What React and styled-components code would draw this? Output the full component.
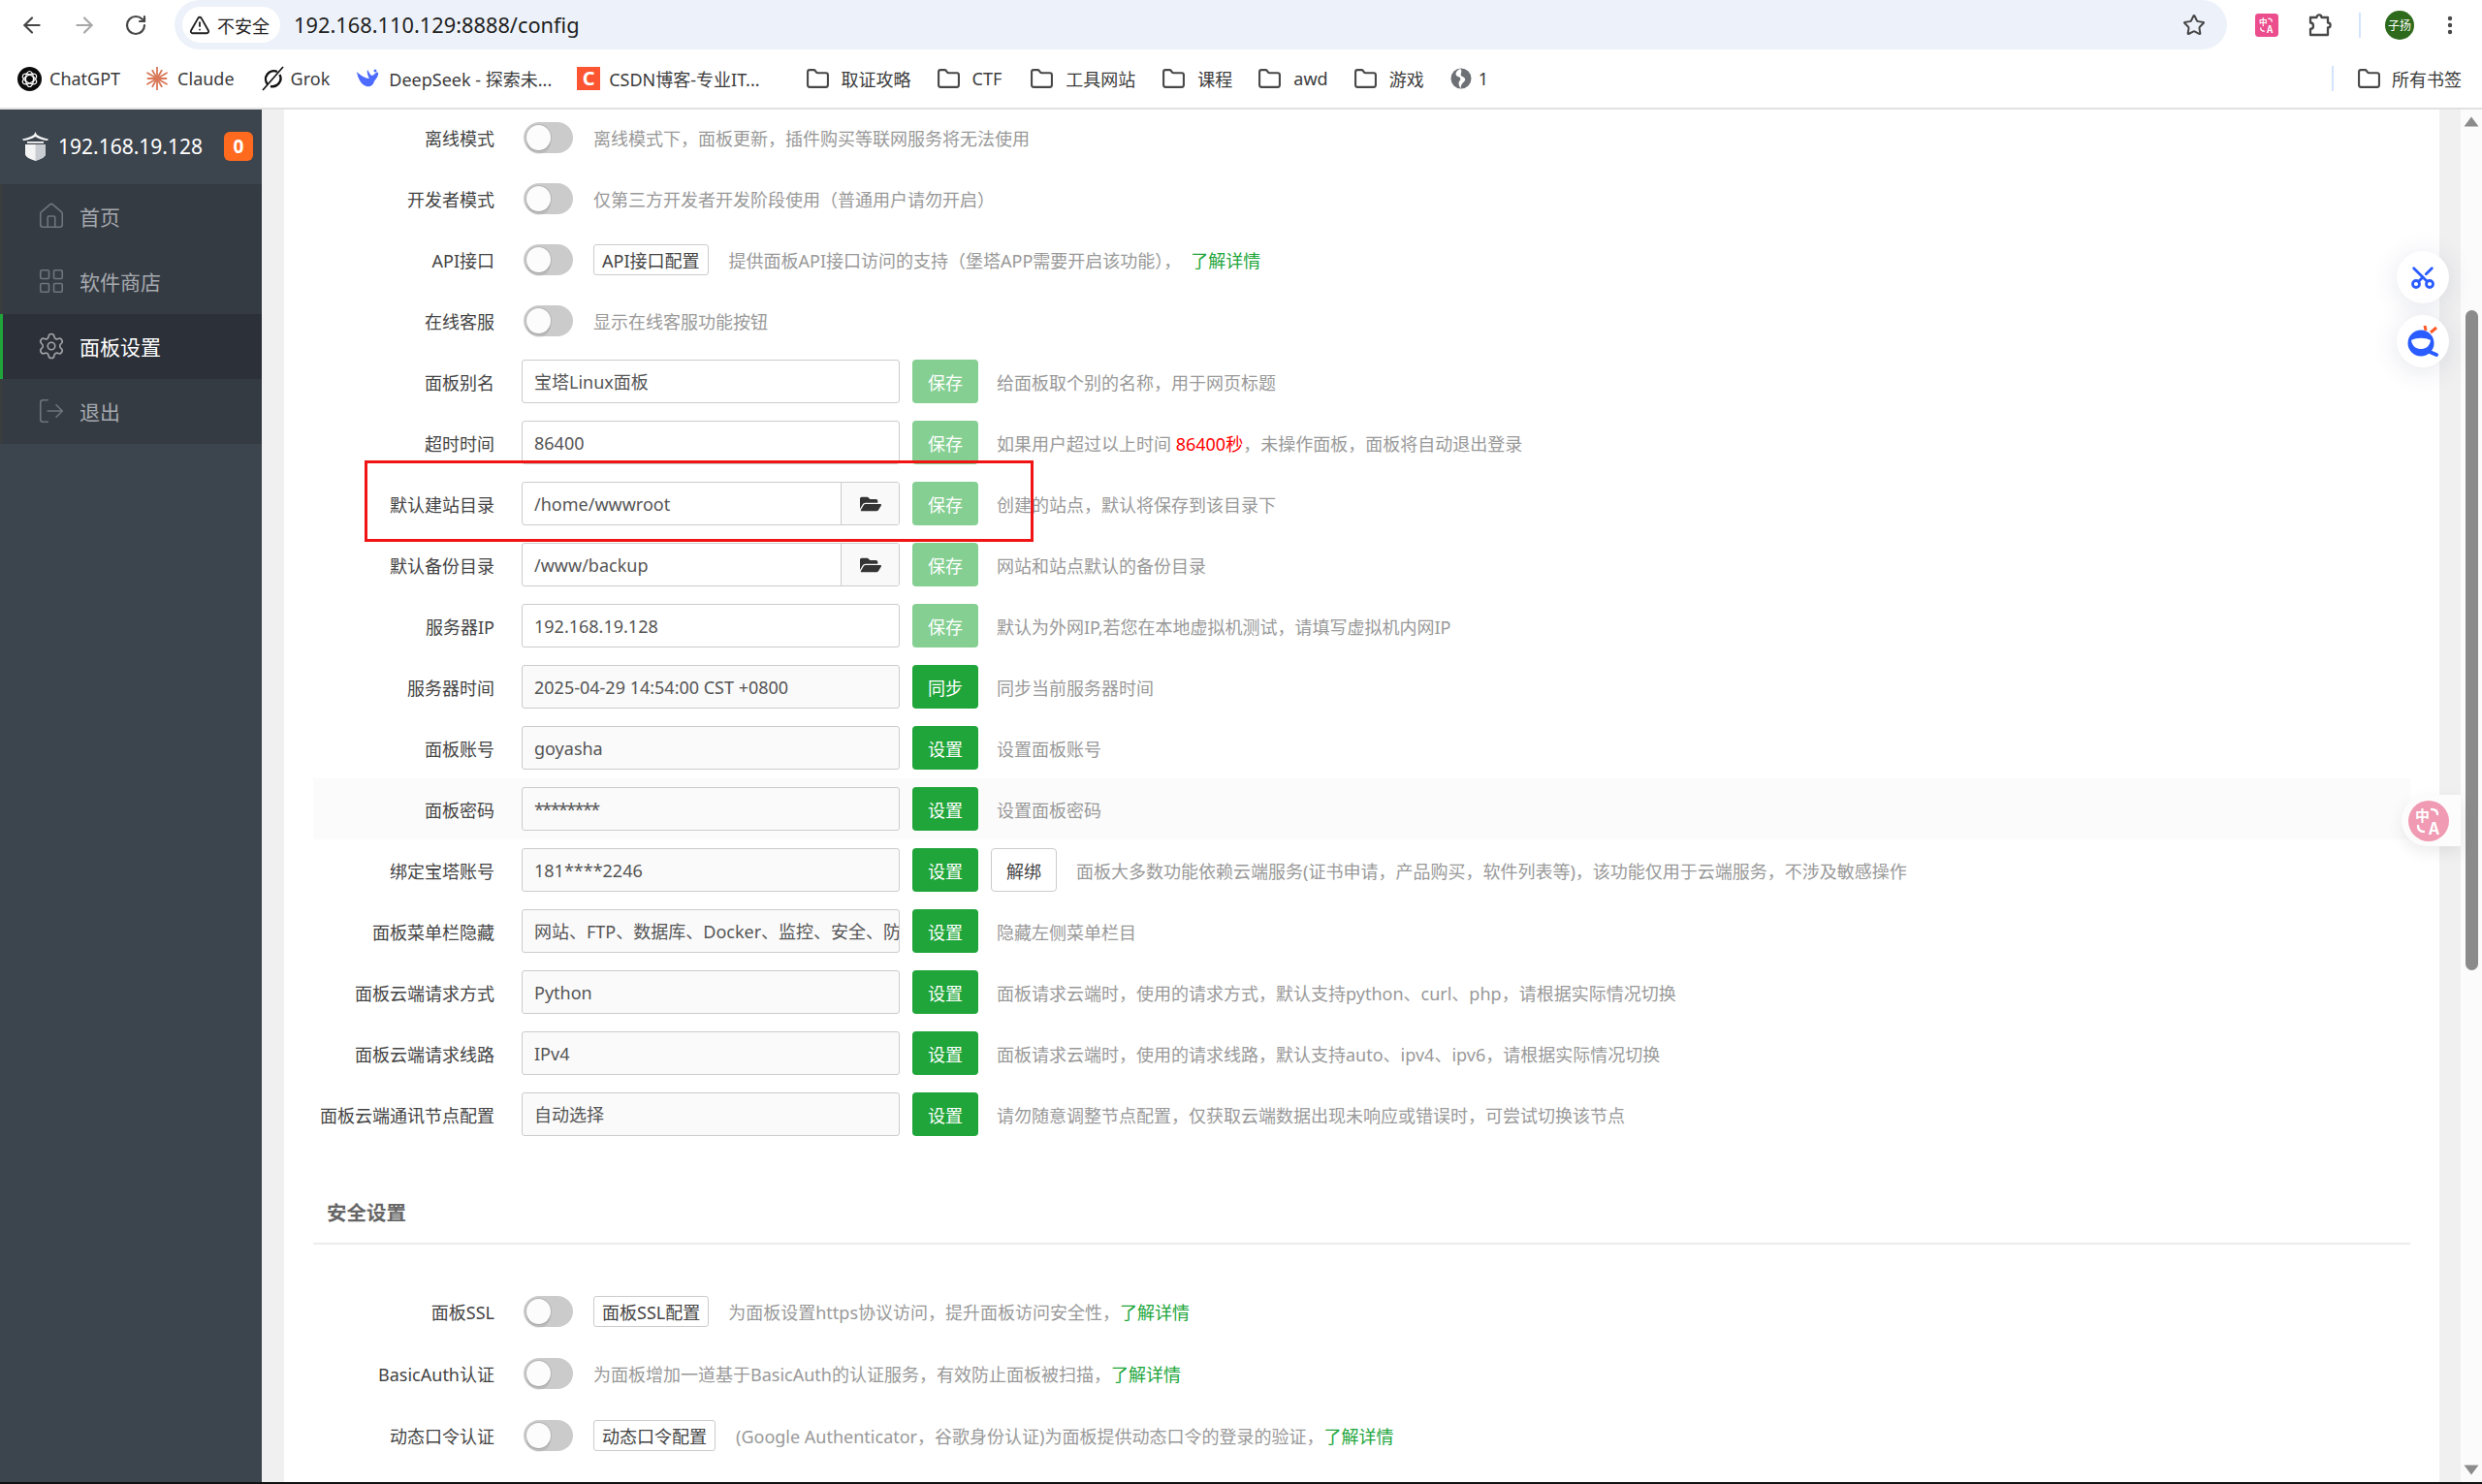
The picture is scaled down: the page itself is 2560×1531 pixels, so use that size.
import React from 'react';
import styled, { createGlobalStyle } from 'styled-components';
import {
  ArrowLeft, ArrowRight, RotateCw, Star, MoreVertical, TriangleAlert,
  Folder, Home, LayoutGrid, Settings, LogOut, Scissors,
} from 'lucide-react';
import { FaFolderOpen } from 'react-icons/fa';

const GlobalStyle = createGlobalStyle`
  html, body { margin: 0; padding: 0; background: #fff; }
  body { font-family: "Noto Sans", "Noto Sans CJK SC", sans-serif; font-size: 18px; }
  * { box-sizing: border-box; }
`;

const Page = styled.div`
  width: 2560px;
  height: 1531px;
  display: flex;
  flex-direction: column;
  overflow: hidden;
`;

/* browser chrome */
const Toolbar = styled.div`
  height: 51px;
  flex: none;
  display: flex;
  align-items: center;
  background: #fff;
`;

const NavButtons = styled.div`
  width: 180px;
  flex: none;
  display: flex;
  align-items: center;
  gap: 28px;
  padding-left: 20px;
`;

const NavIcon = styled.span`
  display: flex;
  color: ${p => (p.$off ? '#a8a8a8' : '#474747')};
`;

const Omnibox = styled.div`
  width: 2117px;
  height: 51px;
  flex: none;
  display: flex;
  align-items: center;
  padding: 0 22px 0 8px;
  background: #edf2fa;
  border-radius: 26px;
`;

const SecurityChip = styled.div`
  height: 37px;
  width: 101px;
  display: flex;
  align-items: center;
  gap: 7px;
  padding-left: 7px;
  background: #fff;
  border-radius: 19px;
  color: #1f1f1f;
  font-size: 18px;
  white-space: nowrap;
`;

const Url = styled.div`
  margin-left: 14px;
  font-size: 21.800px;
  color: #1f1f1f;
  white-space: nowrap;
`;

const OmniEnd = styled.div`
  margin-left: auto;
  display: flex;
  color: #474747;
`;

const ExtBar = styled.div`
  flex: 1;
  display: flex;
  align-items: center;
  padding-left: 29px;
  color: #474747;
`;

const ExtSlot = styled.span`
  display: flex;
  margin-left: 30px;
`;

const VLine = styled.div`
  width: 2px;
  height: ${p => p.$h || 26}px;
  background: #d3e3fd;
  margin: ${p => p.$m || '0 25px 0 27px'};
`;

const Avatar = styled.div`
  width: 30px;
  height: 30px;
  border-radius: 50%;
  background: #2d6a1b;
  color: #fff;
  font-size: 12px;
  display: flex;
  align-items: center;
  justify-content: center;
  white-space: nowrap;
  margin-right: 25px;
`;

const Bookmarks = styled.div`
  height: 62px;
  flex: none;
  display: flex;
  align-items: center;
  padding: 0 20px 0 18px;
  background: #fff;
  border-bottom: 2px solid #e1e1e1;
`;

const Bookmark = styled.div`
  display: flex;
  align-items: center;
  gap: ${p => p.$gap || 10}px;
  margin-right: ${p => p.$after || 26}px;
  font-size: 18px;
  color: #3c3c3c;
  white-space: nowrap;
`;

const BookmarkEnd = styled.div`
  margin-left: auto;
  display: flex;
  align-items: center;
`;

const CsdnMark = styled.span`
  width: 24px;
  height: 24px;
  background: #fc5531;
  color: #fff;
  font-size: 20px;
  font-weight: 700;
  line-height: 24px;
  text-align: center;
`;

/* app body */
const Body = styled.div`
  flex: 1;
  min-height: 0;
  display: flex;
  position: relative;
  overflow: hidden;
`;

const Sidebar = styled.aside`
  width: 270px;
  flex: none;
  background: #3c444d;
`;

const SideHead = styled.div`
  height: 77px;
  display: flex;
  align-items: center;
  padding: 0 0 2px 23px;
  color: #fff;
`;

const HostName = styled.span`
  margin-left: 10px;
  font-size: 21px;
  white-space: nowrap;
`;

const CountBadge = styled.span`
  margin-left: 22px;
  width: 30px;
  height: 30px;
  border-radius: 6px;
  background: #ff6a1f;
  color: #fff;
  font-size: 19px;
  font-weight: 700;
  display: flex;
  align-items: center;
  justify-content: center;
`;

const MenuItem = styled.div`
  height: 67px;
  display: flex;
  align-items: center;
  gap: 17px;
  padding: 0 0 2px 41px;
  font-size: 21px;
  background: ${p => (p.$active ? '#2c3038' : '#353b43')};
  color: ${p => (p.$active ? '#fff' : '#a5a9ae')};
  box-shadow: inset 3px 0 0 ${p => (p.$active ? '#20a53a' : '#3a3d40')};
  svg {
    margin: 0 -3px;
    color: ${p => (p.$active ? '#a0a3a8' : '#6f757c')};
  }
`;

const Main = styled.main`
  flex: 1;
  min-width: 0;
  padding: 0 22px 0 23px;
  background: #f0f0f0;
`;

const Panel = styled.div`
  height: 100%;
  padding: 0 30px;
  background: #fff;
  overflow: hidden;
`;

const Rows = styled.div`
  margin-top: -3px;
`;

const Row = styled.div`
  position: relative;
  height: ${p => p.$h || 63}px;
  display: flex;
  align-items: center;
  background: ${p => (p.$hover ? '#fbfbfb' : 'transparent')};
`;

const Label = styled.label`
  width: 187px;
  flex: none;
  margin-right: 28px;
  text-align: right;
  color: #444;
  white-space: nowrap;
`;

const ToggleTrack = styled.span`
  position: relative;
  width: 51px;
  height: 32px;
  flex: none;
  margin: 0 21px 0 2px;
  border-radius: 16px;
  background: #cbcbcb;
  &::after {
    content: '';
    position: absolute;
    left: 3px;
    top: 3px;
    width: 25px;
    height: 26px;
    border-radius: 50%;
    background: #fcfcfc;
    box-shadow: 0 0 0 1px rgba(0, 0, 0, 0.1), 0 4px 0 rgba(0, 0, 0, 0.08);
  }
`;

const ConfigButton = styled.span`
  height: 32px;
  flex: none;
  display: flex;
  align-items: center;
  padding: 0 8px;
  margin-right: ${p => p.$after || 21}px;
  border: 1px solid #ccc;
  border-radius: 3px;
  background: #fff;
  color: #444;
  white-space: nowrap;
`;

const FieldGroup = styled.div`
  width: 390px;
  height: 45px;
  flex: none;
  display: flex;
  margin-right: 13px;
  border: 1px solid #ccc;
  border-radius: 3px;
  background: ${p => (p.$readonly ? '#fafafa' : '#fff')};
  overflow: hidden;
`;

const FieldValue = styled.div`
  flex: 1;
  min-width: 0;
  padding-left: 12px;
  line-height: 44px;
  letter-spacing: ${p => (p.$masked ? '-1.600px' : 'normal')};
  color: #555;
  white-space: nowrap;
  overflow: hidden;
`;

const FieldAddon = styled.span`
  width: 60px;
  flex: none;
  display: flex;
  align-items: center;
  justify-content: center;
  background: #f9f9f9;
  border-left: 1px solid #ccc;
  color: #333;
`;

const ActionButton = styled.span`
  width: 68px;
  height: 45px;
  flex: none;
  display: flex;
  align-items: center;
  justify-content: center;
  border-radius: 4px;
  background: ${p => (p.$muted ? '#85cf92' : '#20a53a')};
  color: #fff;
`;

const PlainButton = styled.span`
  width: 68px;
  height: 45px;
  flex: none;
  display: flex;
  align-items: center;
  justify-content: center;
  margin-left: 13px;
  border: 1px solid #ccc;
  border-radius: 4px;
  background: #fff;
  color: #444;
`;

const Hint = styled.span`
  margin-left: ${p => p.$left || 0}px;
  color: #999;
  white-space: nowrap;
`;

const LearnMore = styled.span`
  margin-left: ${p => p.$left || 0}px;
  color: #20a53a;
`;

const Alert = styled.span`
  color: #f00;
`;

const SectionTitle = styled.div`
  height: 103px;
  padding: 55px 0 0 14px;
  border-bottom: 2px solid #ececec;
  font-size: 20.500px;
  line-height: 30px;
  font-weight: 700;
  color: #666;
`;

const SectionRows = styled.div`
  margin-top: 37px;
`;

const RedBox = styled.div`
  position: absolute;
  left: 53px;
  top: -13px;
  width: 690px;
  height: 84px;
  border: 3px solid #f01414;
  pointer-events: none;
`;

/* page scrollbar */
const ScrollTrack = styled.div`
  width: 22px;
  flex: none;
  display: flex;
  flex-direction: column;
  align-items: center;
  padding: 7px 0;
  background: #fbfbfb;
`;

const ScrollThumb = styled.div`
  width: 13px;
  height: 681px;
  margin-top: 189px;
  border-radius: 7px;
  background: #8b8b8b;
`;

const ScrollDown = styled.svg`
  margin-top: auto;
`;

/* page widgets floating over the right edge */
const FloatButton = styled.div`
  position: absolute;
  right: 34px;
  top: ${p => p.$top}px;
  width: 54px;
  height: 54px;
  border-radius: 50%;
  background: #fff;
  display: flex;
  align-items: center;
  justify-content: center;
  box-shadow: 0 4px 28px rgba(40, 50, 110, 0.12);
  color: #2b5cff;
`;

const ScissorsIcon = styled(Scissors)`
  transform: rotate(-90deg);
`;

const TranslateTab = styled.div`
  position: absolute;
  right: 22px;
  top: 707px;
  width: 61px;
  height: 53px;
  padding-left: 7px;
  display: flex;
  align-items: center;
  border-radius: 27px 0 0 27px;
  background: #fcfcfc;
  box-shadow: 0 6px 16px rgba(0, 0, 0, 0.08);
`;

const BottomEdge = styled.div`
  height: 2px;
  flex: none;
  background: #111;
`;

const ChatGptIcon = () => (
  <svg width="25" height="25" viewBox="0 0 25 25">
    <circle cx="12.5" cy="12.5" r="12.5" fill="#0b0b0b" />
    <g fill="none" stroke="#fff" strokeWidth="1.2">
      <ellipse cx="12.5" cy="12.5" rx="4" ry="8" />
      <ellipse cx="12.5" cy="12.5" rx="4" ry="8" transform="rotate(60 12.5 12.5)" />
      <ellipse cx="12.5" cy="12.5" rx="4" ry="8" transform="rotate(120 12.5 12.5)" />
    </g>
  </svg>
);

const ClaudeIcon = () => (
  <svg width="24" height="24" viewBox="0 0 24 24" stroke="#d97757" strokeWidth="1.8" strokeLinecap="round">
    {[0, 30, 60, 90, 120, 150, 180, 210, 240, 270, 300, 330].map(a => (
      <line key={a} x1="12" y1="12" x2="12" y2={a % 60 === 0 ? 0.5 : 2.5} transform={`rotate(${a} 12 12)`} />
    ))}
  </svg>
);

const GrokIcon = () => (
  <svg width="27" height="28" viewBox="0 0 27 28" fill="none" stroke="#111" strokeWidth="2.4">
    <path d="M18 7 A8.4 8.4 0 0 0 8 20" />
    <path d="M20.500 10 A8.400 8.400 0 0 1 11 22" />
    <path d="M3 26 L24 2" strokeWidth="1.6" />
  </svg>
);

const DeepSeekIcon = () => (
  <svg width="24" height="22" viewBox="0 0 24 22" fill="#4d6bfe">
    <path d="M1 4 C2 11 6 18 11 19 C15 20 18 18 19 14 C20 12 22 11 23 7 C24 5 22 4 21 5 C19 6 18 8 16 8 C14 6 13 3 12 2 C11 5 13 9 14 11 C10 11 5 8 1 4 Z" />
    <circle cx="20" cy="3" r="1.500" />
  </svg>
);

const GlobeIcon = () => (
  <svg width="22" height="22" viewBox="0 0 22 22">
    <circle cx="11" cy="11" r="10.500" fill="#6d7175" />
    <path d="M10 1 C5 3 4 8 8 9 C11 10 11 12 9 14 C8 16 9 20 11 21 C10 17 14 15 15 13 C16 10 12 9 11 8 C10 6 13 3 10 1 Z" fill="#fff" />
  </svg>
);

const ExtensionIcon = () => (
  <svg width="26" height="26" viewBox="0 0 26 26" fill="none" stroke="#474747" strokeWidth="2.300" strokeLinejoin="round">
    <path d="M3 5 H9.500 C9.500 1.500 14.500 1.500 14.500 5 H21 V10.500 C24.500 10.500 24.500 15.500 21 15.500 V23 H3 V17 C7 17 7 10.500 3 10.500 Z" />
  </svg>
);

const TranslateMark = ({ size, radius, fill }) => (
  <svg width={size} height={size} viewBox="0 0 42 42">
    <rect width="42" height="42" rx={radius} fill={fill} />
    <g fill="#fff" fontFamily="'Noto Sans CJK SC', sans-serif">
      <text x="7" y="21" fontSize="15" fontWeight="700">中</text>
      <text x="21" y="35" fontSize="17" fontWeight="700">A</text>
    </g>
    <g fill="none" stroke="#fff" strokeWidth="2.400" strokeLinecap="round">
      <path d="M24 9 C28 9 30 11 30 14" />
      <path d="M10 26 C10 30 12 32 16 32" />
    </g>
  </svg>
);

const ChatFace = () => (
  <svg width="38" height="38" viewBox="0 0 38 38">
    <path d="M22 8 L21 3 M27 10 L33 5" stroke="#ff5a28" strokeWidth="3" fill="none" />
    <circle cx="17" cy="21" r="13.500" fill="#2b5cff" />
    <path d="M26 30 L33 33" stroke="#2b5cff" strokeWidth="4" strokeLinecap="round" />
    <path d="M7 18 C13 15 21 15 27 18 C26 25 21 27 17 27 C13 27 8 25 7 18 Z" fill="#fff" />
  </svg>
);

const PanelLogo = () => (
  <svg width="27" height="30" viewBox="0 0 27 30" fill="#f4f4f4">
    <path d="M13.500 0 L15 3 C18 5 23 7 27 7.500 L26 9 C20 8.500 17 7 13.500 5 C10 7 7 8.500 1 9 L0 7.500 C4 7 9 5 12 3 Z" />
    <rect x="5" y="10" width="17" height="1.800" />
    <path d="M3 13 H24 V23 C24 26 19 28 13.500 30 C8 28 3 26 3 23 Z" />
    <path d="M13.500 13 H24 V23 C24 26 19 28 13.500 30 Z" fill="#c9cdd1" />
  </svg>
);

const ArrowUp = () => (
  <svg width="16" height="11" viewBox="0 0 16 11"><path d="M8 0.500 L15.500 10.500 H0.500 Z" fill="#8b8b8b" /></svg>
);

const navItems = [
  { name: '首页', Icon: Home },
  { name: '软件商店', Icon: LayoutGrid },
  { name: '面板设置', Icon: Settings, active: true },
  { name: '退出', Icon: LogOut },
];

const folders = [
  { name: '取证攻略' }, { name: 'CTF', after: 29 }, { name: '工具网站', after: 27 },
  { name: '课程' }, { name: 'awd' }, { name: '游戏', after: 27 },
];

const generalToggles = [
  { label: '离线模式', hint: '离线模式下，面板更新，插件购买等联网服务将无法使用' },
  { label: '开发者模式', hint: '仅第三方开发者开发阶段使用（普通用户请勿开启）' },
  { label: 'API接口', config: 'API接口配置', hint: '提供面板API接口访问的支持（堡塔APP需要开启该功能），', more: true, moreGap: 10 },
  { label: '在线客服', hint: '显示在线客服功能按钮' },
];

const fields = [
  { label: '面板别名', value: '宝塔Linux面板', action: '保存', hint: '给面板取个别的名称，用于网页标题' },
  { label: '超时时间', value: '86400', action: '保存', timeout: true },
  { label: '默认建站目录', value: '/home/wwwroot', action: '保存', folder: true, marked: true, hint: '创建的站点，默认将保存到该目录下' },
  { label: '默认备份目录', value: '/www/backup', action: '保存', folder: true, hint: '网站和站点默认的备份目录' },
  { label: '服务器IP', value: '192.168.19.128', action: '保存', hint: '默认为外网IP,若您在本地虚拟机测试，请填写虚拟机内网IP' },
  { label: '服务器时间', value: '2025-04-29 14:54:00 CST +0800', action: '同步', locked: true, hint: '同步当前服务器时间' },
  { label: '面板账号', value: 'goyasha', action: '设置', locked: true, hint: '设置面板账号' },
  { label: '面板密码', value: '********', masked: true, action: '设置', locked: true, hover: true, hint: '设置面板密码' },
  { label: '绑定宝塔账号', value: '181****2246', action: '设置', locked: true, unbind: true, hint: '面板大多数功能依赖云端服务(证书申请，产品购买，软件列表等)，该功能仅用于云端服务，不涉及敏感操作' },
  { label: '面板菜单栏隐藏', value: '网站、FTP、数据库、Docker、监控、安全、防', action: '设置', locked: true, hint: '隐藏左侧菜单栏目' },
  { label: '面板云端请求方式', value: 'Python', action: '设置', locked: true, hint: '面板请求云端时，使用的请求方式，默认支持python、curl、php，请根据实际情况切换' },
  { label: '面板云端请求线路', value: 'IPv4', action: '设置', locked: true, hint: '面板请求云端时，使用的请求线路，默认支持auto、ipv4、ipv6，请根据实际情况切换' },
  { label: '面板云端通讯节点配置', value: '自动选择', action: '设置', locked: true, hint: '请勿随意调整节点配置，仅获取云端数据出现未响应或错误时，可尝试切换该节点' },
];

const securityToggles = [
  { label: '面板SSL', config: '面板SSL配置', after: 20, hint: '为面板设置https协议访问，提升面板访问安全性，', more: true },
  { label: 'BasicAuth认证', hint: '为面板增加一道基于BasicAuth的认证服务，有效防止面板被扫描，', more: true },
  { label: '动态口令认证', config: '动态口令配置', hint: '(Google Authenticator，谷歌身份认证)为面板提供动态口令的登录的验证，', more: true },
];

const ToggleRow = ({ item, height }) => (
  <Row $h={height}>
    <Label>{item.label}</Label>
    <ToggleTrack />
    {item.config && <ConfigButton $after={item.after}>{item.config}</ConfigButton>}
    <Hint>
      {item.hint}
      {item.more && <LearnMore $left={item.moreGap}>了解详情</LearnMore>}
    </Hint>
  </Row>
);

const FieldRow = ({ item }) => (
  <Row $hover={item.hover}>
    <Label>{item.label}</Label>
    <FieldGroup $readonly={item.locked}>
      <FieldValue $masked={item.masked}>{item.value}</FieldValue>
      {item.folder && <FieldAddon><FaFolderOpen size={22} /></FieldAddon>}
    </FieldGroup>
    <ActionButton $muted={item.action === '保存'}>{item.action}</ActionButton>
    {item.unbind && <PlainButton>解绑</PlainButton>}
    <Hint $left={item.unbind ? 20 : 19}>
      {item.timeout
        ? <>如果用户超过以上时间 <Alert>86400秒</Alert>，未操作面板，面板将自动退出登录</>
        : item.hint}
    </Hint>
    {item.marked && <RedBox />}
  </Row>
);

export default function App() {
  return (
    <Page>
      <GlobalStyle />
      <Toolbar>
        <NavButtons>
          <NavIcon><ArrowLeft size={26} strokeWidth={2} /></NavIcon>
          <NavIcon $off><ArrowRight size={26} strokeWidth={2} /></NavIcon>
          <NavIcon><RotateCw size={24} strokeWidth={2.2} /></NavIcon>
        </NavButtons>
        <Omnibox>
          <SecurityChip><TriangleAlert size={22} strokeWidth={2} />不安全</SecurityChip>
          <Url>192.168.110.129:8888/config</Url>
          <OmniEnd><Star size={24} strokeWidth={2} /></OmniEnd>
        </Omnibox>
        <ExtBar>
          <TranslateMark size={24} radius={6} fill="#ec4d8c" />
          <ExtSlot><ExtensionIcon /></ExtSlot>
          <VLine />
          <Avatar>子扬</Avatar>
          <MoreVertical size={24} strokeWidth={2.4} />
        </ExtBar>
      </Toolbar>
      <Bookmarks>
        <Bookmark $gap={8}><ChatGptIcon />ChatGPT</Bookmark>
        <Bookmark $gap={9}><ClaudeIcon />Claude</Bookmark>
        <Bookmark $gap={5} $after={27}><GrokIcon />Grok</Bookmark>
        <Bookmark><DeepSeekIcon />DeepSeek - 探索未...</Bookmark>
        <Bookmark $after={47} $gap={9}><CsdnMark>C</CsdnMark>CSDN博客-专业IT...</Bookmark>
        {folders.map(f => (
          <Bookmark key={f.name} $after={f.after} $gap={12}>
            <Folder size={25} strokeWidth={2} color="#474747" />{f.name}
          </Bookmark>
        ))}
        <Bookmark $gap={7}><GlobeIcon />1</Bookmark>
        <BookmarkEnd>
          <VLine $h={26} $m="0 24px 0 0" />
          <Bookmark $after={1} $gap={11}>
            <Folder size={25} strokeWidth={2} color="#474747" />所有书签
          </Bookmark>
        </BookmarkEnd>
      </Bookmarks>
      <Body>
        <Sidebar>
          <SideHead>
            <PanelLogo />
            <HostName>192.168.19.128</HostName>
            <CountBadge>0</CountBadge>
          </SideHead>
          {navItems.map(({ name, Icon, active }) => (
            <MenuItem key={name} $active={active}>
              <Icon size={30} strokeWidth={1.3} />
              {name}
            </MenuItem>
          ))}
        </Sidebar>
        <Main>
          <Panel>
            <Rows>
              {generalToggles.map(t => <ToggleRow key={t.label} item={t} />)}
              {fields.map(f => <FieldRow key={f.label} item={f} />)}
            </Rows>
            <SectionTitle>安全设置</SectionTitle>
            <SectionRows>
              {securityToggles.map(t => <ToggleRow key={t.label} item={t} height={64} />)}
            </SectionRows>
          </Panel>
        </Main>
        <ScrollTrack>
          <ArrowUp />
          <ScrollThumb />
          <ScrollDown width="16" height="11" viewBox="0 0 16 11">
            <path d="M8 10.500 L15.500 0.500 H0.500 Z" fill="#8b8b8b" />
          </ScrollDown>
        </ScrollTrack>
        <FloatButton $top={146}><ScissorsIcon size={28} strokeWidth={2.4} /></FloatButton>
        <FloatButton $top={212}><ChatFace /></FloatButton>
        <TranslateTab><TranslateMark size={42} radius={21} fill="#f09ab3" /></TranslateTab>
      </Body>
      <BottomEdge />
    </Page>
  );
}
